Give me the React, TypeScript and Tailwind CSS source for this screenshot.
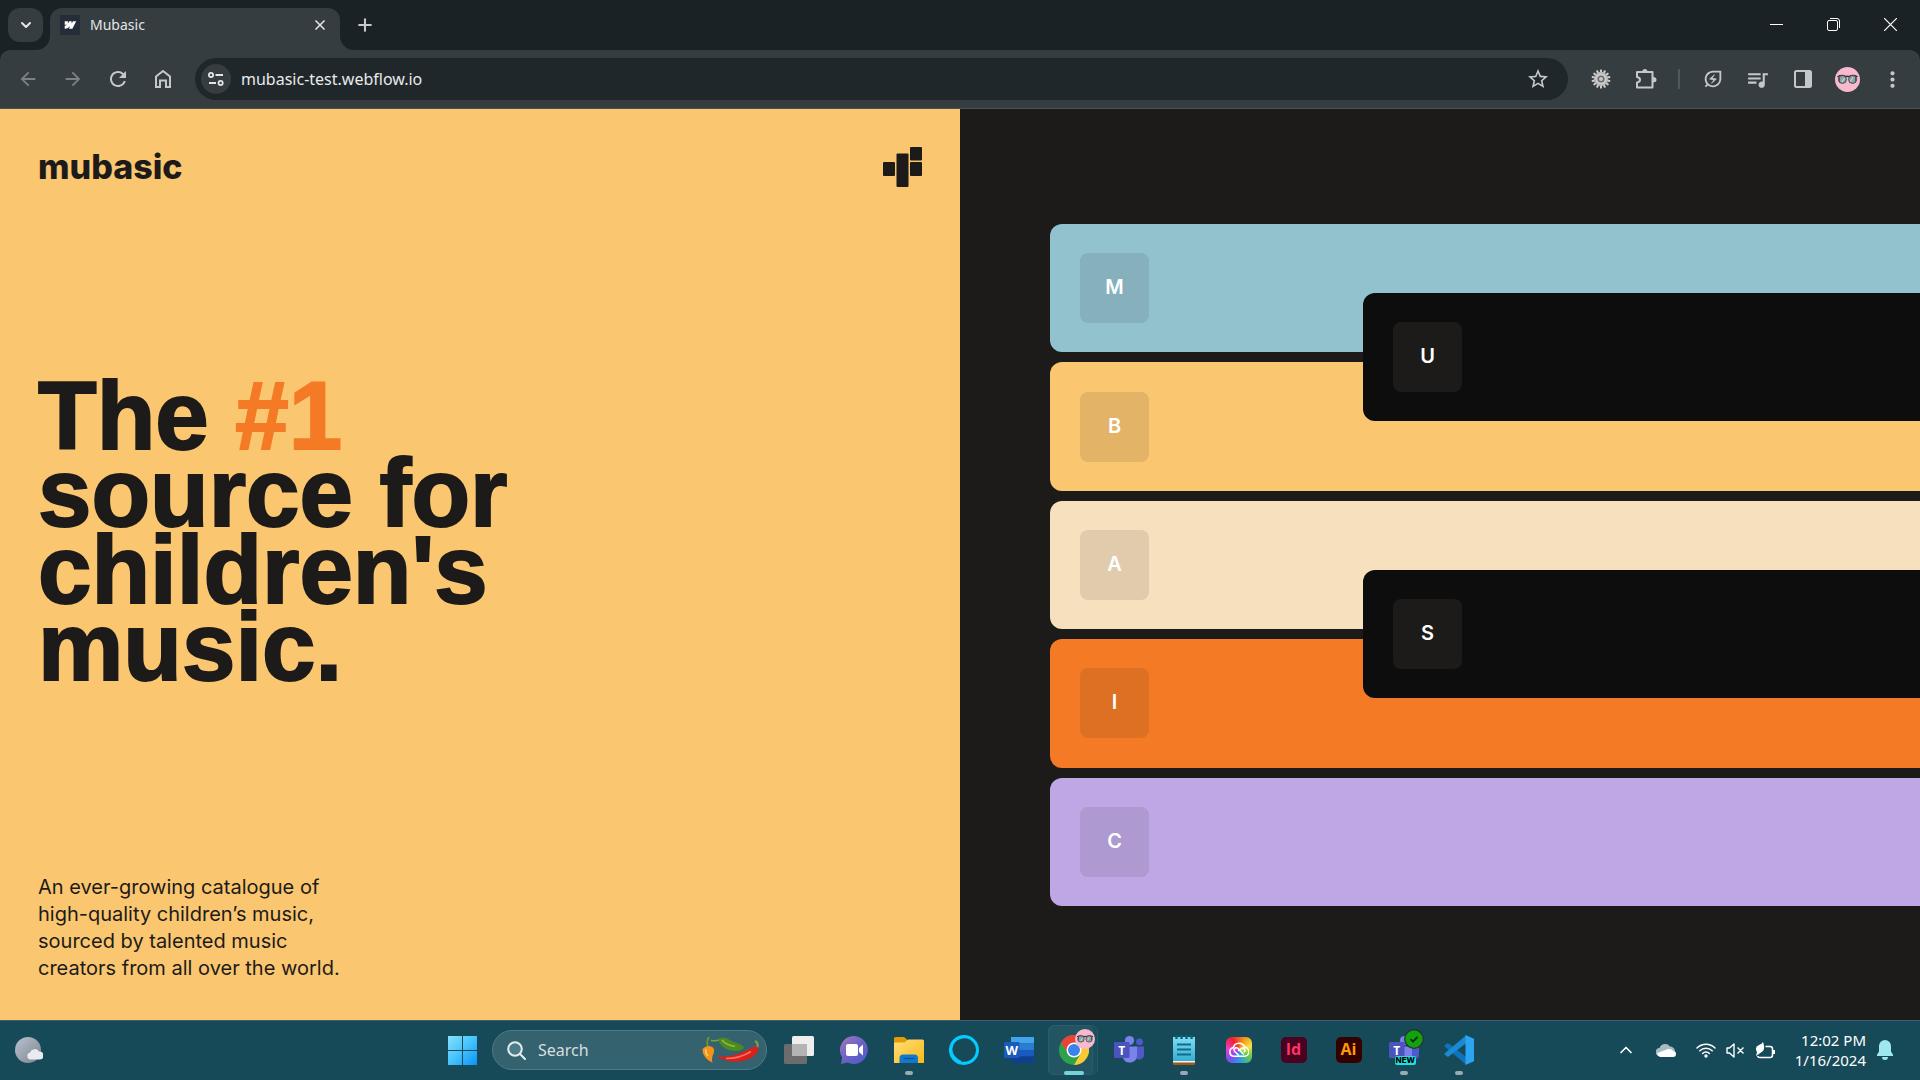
import React from "react";
import { ChevronDown, ChevronUp, Plus, X } from "lucide-react";
import {
  MdArrowBack,
  MdArrowForward,
  MdMoreVert,
  MdOutlineEnergySavingsLeaf,
  MdQueueMusic,
  MdRefresh,
  MdStarBorder,
} from "react-icons/md";

const UI_FONT = "font-['Noto_Sans','Open_Sans',sans-serif]";

/* ---------- shared drawings ---------- */

function Sunglasses({ className }: { className?: string }) {
  return (
    <svg viewBox="0 0 25 25" className={className} aria-hidden="true">
      <circle cx="12.500" cy="12.500" r="12.500" fill="#f8b9cf" />
      <path d="M2.500 9.800Q7 7.500 11 9.600q1.500-.8 3 0 4-2.100 8.500.2" fill="none" stroke="#2f3133" strokeWidth="1.500" />
      <circle cx="7.400" cy="12.400" r="4" fill="#8ba3a8" stroke="#4a4744" strokeWidth="1" />
      <circle cx="17.600" cy="12.400" r="4" fill="#8ba3a8" stroke="#4a4744" strokeWidth="1" />
      <path d="M5 9.500a3.800 3.800 0 0 0 0 5.800zM20 9.500a3.800 3.800 0 0 1 0 5.800z" fill="#4b5558" />
      <path d="M7 15l2.500-4M15.500 14.500l2.500-4" stroke="#c6d6d8" strokeWidth="1.200" />
    </svg>
  );
}

/* ---------- browser window ---------- */

function TabStrip() {
  return (
    <div className="flex h-[50px] bg-[#1b2225] text-[#e3e6e7]">
      <button aria-label="Search tabs" className="ml-2 mt-2 flex h-[34px] w-[35px] items-center justify-center rounded-xl bg-[#363d40]">
        <ChevronDown size={16} strokeWidth={3} />
      </button>
      <div className="relative ml-[7px] mt-2 flex h-[42px] w-[290px] items-center rounded-t-xl bg-[#363d40] pb-2 pl-[10px] pr-3">
        <svg viewBox="0 0 14 14" className="absolute -left-[14px] bottom-0 size-[14px]" aria-hidden="true">
          <path d="M14 0v14H0A14 14 0 0 0 14 0z" fill="#363d40" />
        </svg>
        <svg viewBox="0 0 14 14" className="absolute -right-[14px] bottom-0 size-[14px]" aria-hidden="true">
          <path d="M0 0v14h14A14 14 0 0 1 0 0z" fill="#363d40" />
        </svg>
        <svg viewBox="0 0 20 20" className="size-5" aria-hidden="true">
          <path d="M0 0h20v20H0z" fill="#262c38" />
          <path d="M16.200 6.200l-3.800 7.600H8.900l1.300-2.700c-1.400 1.700-3 2.600-5.500 2.700v-3s1.500-.1 2.400-1H4.700V6.300h3.200v2.300l1.300-2.400h2.400v2.300l1.400-2.300z" fill="#fff" />
        </svg>
        <span className="ml-[10px] flex-1 text-[14px] leading-5">Mubasic</span>
        <button aria-label="Close tab">
          <X size={16} strokeWidth={2.500} />
        </button>
      </div>
      <button aria-label="New tab" className="ml-[15px] mt-[15px] flex size-5 items-center justify-center text-[#c5cbcd]">
        <Plus size={20} strokeWidth={2.500} />
      </button>
      <div className="ml-auto flex h-10 pr-px pt-[9px] text-white">
        <button aria-label="Minimize" className="flex w-[57px] items-center justify-center">
          <svg viewBox="0 0 13 13" className="size-[13px]"><path d="M0 6.500h13" stroke="currentColor" /></svg>
        </button>
        <button aria-label="Restore" className="flex w-[57px] items-center justify-center">
          <svg viewBox="0 0 13 13" className="size-[13px]" fill="none" stroke="currentColor">
            <rect x=".5" y="2.500" width="10" height="10" rx="1.500" />
            <path d="M3 .5h7a2.500 2.500 0 0 1 2.500 2.500v7" />
          </svg>
        </button>
        <button aria-label="Close" className="flex w-[57px] items-center justify-center">
          <svg viewBox="0 0 13 13" className="size-[13px]"><path d="M0 0l13 13M13 0L0 13" stroke="currentColor" strokeWidth="1.200" /></svg>
        </button>
      </div>
    </div>
  );
}

function ToolButton({ label, children }: { label: string; children: React.ReactNode }) {
  return (
    <button aria-label={label} className="flex h-[42px] w-[45px] shrink-0 items-center justify-center">
      {children}
    </button>
  );
}

function GearIcon() {
  const teeth = Array.from({ length: 14 }, (_, i) => (i * 360) / 14);
  return (
    <svg viewBox="0 0 20 20" className="size-5" aria-hidden="true">
      {teeth.map((a) => (
        <rect key={a} x="9" y=".5" width="2" height="4" rx=".6" fill="#cfcfcf" transform={`rotate(${a} 10 10)`} />
      ))}
      <circle cx="10" cy="10" r="7.200" fill="#b4b4b4" />
      <circle cx="10" cy="10" r="5.500" fill="#cdcdcd" />
      <circle cx="10" cy="10" r="3.600" fill="#6a6c6d" />
      <circle cx="10" cy="10" r="2" fill="#c8c8c8" />
    </svg>
  );
}

function Toolbar() {
  return (
    <div className="bg-[#1b2225]">
      <div className="flex h-[59px] items-start rounded-t-[10px] border-b border-[#4b5254] bg-[#363d40] px-[5px] pt-2 text-[#c3c9cb]">
        <div className="flex">
          <button aria-label="Back" className="flex h-[42px] w-[45px] items-center justify-center text-[#7c8284]"><MdArrowBack size={22} /></button>
          <button aria-label="Forward" className="flex h-[42px] w-[45px] items-center justify-center text-[#7c8284]"><MdArrowForward size={22} /></button>
          <ToolButton label="Reload"><MdRefresh size={24} /></ToolButton>
          <ToolButton label="Home">
            <svg viewBox="0 0 18 20" className="h-5 w-[18px]" fill="none" stroke="currentColor" strokeWidth="2">
              <path d="M2 7.500L9 2l7 5.500V18h-4v-6.500H6V18H2z" />
            </svg>
          </ToolButton>
        </div>
        <div className="ml-[10px] flex h-[42px] flex-1 items-center rounded-full bg-[#20272a] pl-[6px] pr-[18px]">
          <button aria-label="View site information" className="flex size-[30px] items-center justify-center rounded-full bg-[#363d40]">
            <svg viewBox="0 0 16 14" className="h-[14px] w-4" fill="none" stroke="#e3e6e7" strokeWidth="1.800">
              <circle cx="3" cy="3" r="2.100" /><path d="M7.500 3H15M1 11h7" /><circle cx="12.600" cy="11" r="2.100" />
            </svg>
          </button>
          <input aria-label="Address" defaultValue="mubasic-test.webflow.io" className="ml-[10px] h-9 min-w-0 flex-1 bg-transparent text-[16px] text-[#e8eaeb] outline-none" />
          <button aria-label="Bookmark this tab"><MdStarBorder size={24} /></button>
        </div>
        <div className="ml-[10px] flex items-center">
          <ToolButton label="Settings extension"><GearIcon /></ToolButton>
          <ToolButton label="Extensions">
            <svg viewBox="0 0 22 22" className="size-[22px]" fill="none" stroke="currentColor" strokeWidth="2" strokeLinejoin="round">
              <path d="M2 4h15.500v15.500H2v-5q3-.4 3-2.700T2 9z" />
              <path d="M7.400 3.500a2.500 2.500 0 0 1 5 0zM18 9.300a2.500 2.500 0 0 1 0 5z" fill="currentColor" stroke="none" />
              <path d="M18 9.300h1a2.500 2.500 0 0 1 0 5h-1z" fill="currentColor" stroke="none" />
            </svg>
          </ToolButton>
          <span className="mx-[10px] h-5 w-[2px] bg-[#50585b]" />
          <ToolButton label="Energy saver"><MdOutlineEnergySavingsLeaf size={22} /></ToolButton>
          <ToolButton label="Media controls"><MdQueueMusic size={25} /></ToolButton>
          <ToolButton label="Side panel">
            <svg viewBox="0 0 18 18" className="size-[18px]">
              <rect x="1" y="1" width="16" height="16" rx="1.500" fill="none" stroke="currentColor" strokeWidth="2" />
              <path d="M11 1h6v16h-6z" fill="currentColor" />
            </svg>
          </ToolButton>
          <ToolButton label="Profile"><Sunglasses className="size-[25px]" /></ToolButton>
          <ToolButton label="Menu"><MdMoreVert size={25} /></ToolButton>
        </div>
      </div>
    </div>
  );
}

/* ---------- page ---------- */

function Tile({ letter, tone }: { letter: string; tone: string }) {
  return (
    <span className={`flex h-[70px] w-[69px] items-center justify-center rounded-lg pb-0.5 text-xl font-semibold text-white ${tone}`}>
      {letter}
    </span>
  );
}

type Key = { letter: string; bg: string; sharp?: string };

const KEYS: Key[] = [
  { letter: "M", bg: "bg-[#92c2ce]", sharp: "U" },
  { letter: "B", bg: "bg-[#fac670]" },
  { letter: "A", bg: "bg-[#f6e0be]", sharp: "S" },
  { letter: "I", bg: "bg-[#f47a25]" },
  { letter: "C", bg: "bg-[#bfa7e5]" },
];

function Keyboard() {
  return (
    <section aria-label="Music keyboard" className="flex flex-col gap-[10px] overflow-hidden bg-[#1d1b19] pb-[114px] pl-[90px] pt-[115px] font-['Inter',sans-serif]">
      {KEYS.map((key) => (
        <div key={key.letter} className={`relative flex flex-1 items-center rounded-l-xl pl-[30px] ${key.bg}`}>
          <Tile letter={key.letter} tone="bg-[#1d1b19]/10" />
          {key.sharp && (
            <div className="absolute left-[313px] right-0 top-[69px] z-10 flex h-full items-center rounded-l-xl bg-[#0d0d0d] pl-[30px]">
              <Tile letter={key.sharp} tone="bg-[#1d1b19]" />
            </div>
          )}
        </div>
      ))}
    </section>
  );
}

function Hero() {
  return (
    <section className="flex flex-col justify-between bg-[#fac670] p-[38px] font-['Liberation_Sans',sans-serif] text-[#1d1b19]">
      <header className="flex items-start justify-between">
        <a href="#" className="font-['Inter',sans-serif] text-[34px] leading-10 font-extrabold">mubasic</a>
        <svg viewBox="0 0 39 40" className="h-10 w-[39px]" fill="currentColor" aria-hidden="true">
          <rect x="0" y="15" width="12" height="14" rx="1" />
          <rect x="13.500" y="6.500" width="12" height="33.500" rx="1" />
          <rect x="27" y="0" width="12" height="13.500" rx="1" />
          <rect x="27" y="15" width="12" height="14" rx="1" />
        </svg>
      </header>
      <h1 className="text-[96px] leading-[77px] font-bold [-webkit-text-stroke:2px_currentColor]">
        The <span className="text-[#f47a25]">#1</span>
        <br />source for
        <br />children's
        <br />music.
      </h1>
      <p className="font-['Inter',sans-serif] text-xl leading-[27px]">
        An ever-growing catalogue of
        <br />high-quality children’s music,
        <br />sourced by talented music
        <br />creators from all over the world.
      </p>
    </section>
  );
}

/* ---------- taskbar ---------- */

function StartIcon() {
  return (
    <svg viewBox="0 0 30 30" className="size-[30px]">
      <defs>
        <linearGradient id="start" gradientUnits="userSpaceOnUse" x1="0" y1="0" x2="30" y2="30">
          <stop offset="0" stopColor="#8be3fd" /><stop offset=".5" stopColor="#47c4fb" /><stop offset="1" stopColor="#0a93f5" />
        </linearGradient>
      </defs>
      <path d="M1 1h14v14H1zM16 1h14v14H16zM1 16h14v14H1zM16 16h14v14H16z" fill="url(#start)" />
    </svg>
  );
}

function PeppersIcon() {
  return (
    <svg viewBox="0 0 58 28" className="h-7 w-[58px]" aria-hidden="true">
      <path d="M7 11Q5 5 8 1" fill="none" stroke="#6b9a2a" strokeWidth="1.800" />
      <path d="M1.500 13Q6 8 12 11.500q2.500 3-.5 8.500-1 4 0 6.800Q7 25 4 21 1 17 1.500 13z" fill="#f2931d" />
      <path d="M5 13q-1 4 2 7" stroke="#ffd07a" strokeWidth="1.500" fill="none" />
      <path d="M10 4.500q5 1 9-1" fill="none" stroke="#7ba636" strokeWidth="1.500" />
      <path d="M17 3q5-3 10 0t10 4.500q5 1.500 6 4.500-4 4-13 2.500Q19 12 17 3z" fill="#4d8b1e" />
      <path d="M21 4q4 5 13 6.500" stroke="#8abf4a" strokeWidth="1.500" fill="none" />
      <path d="M56 12q2-5-2-7" fill="none" stroke="#7ba636" strokeWidth="2" />
      <path d="M15.500 19.500q8 2 16 0t14-5q4-3 9-4 3 0 3 3-3 8-12 10.500-18 5-30-4.500z" fill="#d8201c" />
      <path d="M25 22.500q14 0 25-7" stroke="#ff6d5e" strokeWidth="1.500" fill="none" />
    </svg>
  );
}

function TaskViewIcon() {
  return (
    <svg viewBox="0 0 30 28" className="h-7 w-[30px]">
      <rect x="0" y="8" width="23" height="20" rx="1.500" fill="#6c6c6c" />
      <rect x="8" y="0" width="22" height="20" rx="1.500" fill="#eeeeee" />
      <path d="M8 8h15v12H8z" fill="#b4b4b4" />
    </svg>
  );
}

function ChatIcon() {
  return (
    <svg viewBox="0 0 30 30" className="size-[30px]">
      <defs>
        <linearGradient id="chat" x1="0" y1="0" x2="1" y2="1"><stop offset="0" stopColor="#a478b8" /><stop offset=".5" stopColor="#6b63c6" /><stop offset="1" stopColor="#5058c8" /></linearGradient>
      </defs>
      <path d="M15 1a14 14 0 1 1-6.500 26.500L2 29l1.200-6.500A14 14 0 0 1 15 1z" fill="url(#chat)" />
      <rect x="7" y="9" width="12" height="12" rx="2" fill="#fff" />
      <path d="M20 13l4-3.500v11L20 17z" fill="#fff" />
    </svg>
  );
}

function FolderIcon() {
  return (
    <svg viewBox="0 0 30 28" className="h-7 w-[30px]">
      <defs><linearGradient id="folder" x1="0" y1="0" x2="1" y2="1"><stop offset="0" stopColor="#ffe07a" /><stop offset="1" stopColor="#f8b916" /></linearGradient></defs>
      <path d="M0 2.500A1.500 1.500 0 0 1 1.500 1H10l3 2.500v5H0z" fill="#e39c06" />
      <path d="M0 6.500h10.500L14 3.500h14.500A1.500 1.500 0 0 1 30 5v22H0z" fill="url(#folder)" />
      <path d="M5.500 27v-5A3.500 3.500 0 0 1 9 18.500h11.500A3.500 3.500 0 0 1 24 22v5z" fill="#1178cf" />
      <path d="M9.500 22.500h11" stroke="#0a4f94" strokeWidth="1.200" />
    </svg>
  );
}

function AlexaIcon() {
  return (
    <svg viewBox="0 0 30 30" className="size-[30px]">
      <path d="M15 0a15 15 0 0 1 0 30q-2.500 0-2.700-1.600-.1-1.600 1.500-1.700A11.800 11.800 0 1 0 3.400 13.700Q3 21.500 12.500 26v3.800A15 15 0 0 1 15 0z" fill="#05caff" />
    </svg>
  );
}

function WordIcon() {
  return (
    <svg viewBox="0 0 30 28" className="h-7 w-[30px]">
      <path d="M7 1h23v6.500H7z" fill="#41a5ee" /><path d="M7 7.500h23V14H7z" fill="#2b7cd3" />
      <path d="M7 14h23v6.500H7z" fill="#185abd" /><path d="M7 20.500h23V27H7z" fill="#103f91" />
      <rect x="0" y="6" width="15.500" height="16" rx="1.200" fill="#185abd" />
      <text x="7.700" y="18.700" textAnchor="middle" fontSize="13" fontWeight="700" fill="#fff" className="font-['Open_Sans',sans-serif]">W</text>
    </svg>
  );
}

function ChromeIcon() {
  return (
    <svg viewBox="0 0 30 30" className="size-[30px]">
      <circle cx="15" cy="15" r="15" fill="#2ba24c" />
      <path d="M2 7.500A15 15 0 0 1 28 7.500H15L9 18.500z" fill="#ea4335" />
      <path d="M28 7.500A15 15 0 0 1 15 30l6.500-11.300L22 7.500z" fill="#fcc934" />
      <circle cx="15" cy="15" r="7.500" fill="#fff" /><circle cx="15" cy="15" r="6" fill="#3b82ec" />
    </svg>
  );
}

function TeamsIcon() {
  return (
    <svg viewBox="0 0 30 28" className="h-7 w-[30px]">
      <circle cx="25.500" cy="5.800" r="3.400" fill="#5059c9" /><path d="M21 10.500h9v8a5 5 0 0 1-9 3z" fill="#5059c9" />
      <circle cx="15.500" cy="4.600" r="4.600" fill="#7b83eb" /><path d="M9 10.500h14V20a7.300 7.300 0 0 1-14 2z" fill="#7b83eb" />
      <rect x="0" y="6" width="15.500" height="16" rx="1.200" fill="#4b53bc" />
      <text x="7.700" y="18.500" textAnchor="middle" fontSize="12" fontWeight="700" fill="#fff" className="font-['Open_Sans',sans-serif]">T</text>
    </svg>
  );
}

function NotepadIcon() {
  return (
    <svg viewBox="0 0 22 30" className="h-[30px] w-[22px]">
      <defs><linearGradient id="note" x1="0" y1="0" x2="0" y2="1"><stop offset="0" stopColor="#7fdcf5" /><stop offset="1" stopColor="#35afcf" /></linearGradient></defs>
      <path d="M0 26h22v3a1 1 0 0 1-1 1H1a1 1 0 0 1-1-1z" fill="#a5570f" /><path d="M0 25h22v2.500H0z" fill="#f2f2f2" />
      <path d="M0 2h22v24H0z" fill="url(#note)" />
      <path d="M4 9.500h14M4 14.500h14M4 19.500h14" stroke="#106a8c" strokeWidth="2" />
      <path d="M3.500 0v4M8.500 0v4M13.500 0v4M18.500 0v4" stroke="#125f80" strokeWidth="2.400" />
    </svg>
  );
}

function CreativeCloudIcon() {
  return (
    <span className="flex size-[26px] items-center justify-center rounded-md bg-[conic-gradient(from_20deg,#f58a1c,#f6e53b,#61c84a,#2f9ae8,#7a4ef0,#f13cc8,#ee1f2d,#f58a1c)]">
      <svg viewBox="0 0 22 18" className="h-4 w-5" fill="none" stroke="#fff" strokeWidth="1.800">
        <path d="M5.500 16a4.800 4.800 0 0 1-1-9.500A6.800 6.800 0 0 1 17.500 6 5 5 0 0 1 16.500 16z" />
        <path d="M11 15.500L6 10.500a2.500 2.500 0 0 1 3.500-3.500l7 7M10 10l3.500-2.500a2.500 2.500 0 0 1 3 4" />
      </svg>
    </span>
  );
}

function TeamsNewIcon() {
  return (
    <span className="relative flex flex-col items-center">
      <TeamsIcon />
      <svg viewBox="0 0 20 20" className="absolute -right-[5px] -top-[7px] size-5">
        <circle cx="10" cy="10" r="9.300" fill="#13a10e" stroke="#263238" strokeWidth="1.300" />
        <path d="M6.500 10.200l2.500 2.400 4.500-4.600" fill="none" stroke="#0b2e0b" strokeWidth="1.800" />
      </svg>
      <span className="absolute -bottom-[1px] left-[6px] rounded-[2px] bg-[#21dfe0] px-px font-['Inter',sans-serif] text-[8px] leading-[9px] font-extrabold text-black">NEW</span>
    </span>
  );
}

function VsCodeIcon() {
  return (
    <svg viewBox="0 0 30 30" className="size-[30px]">
      <path d="M.8 10.300L3 8.500q.8-.6 1.600 0L22.500 22v8L.8 11.800q-.7-.8 0-1.500z" fill="#1072b8" />
      <path d="M.8 19.700L3 21.500q.8.6 1.600 0L22.500 8V0L.8 18.200q-.7.800 0 1.500z" fill="#1b8ad6" />
      <path d="M21.500 0L30 3.700v22.600L21.500 30z" fill="#2ba4f2" />
    </svg>
  );
}

function AdobeIcon({ text, tone }: { text: string; tone: string }) {
  return (
    <span className={`flex size-[26px] items-center justify-center rounded-[5px] pb-[2px] font-['Open_Sans',sans-serif] text-[16px] leading-none font-bold ${tone}`}>{text}</span>
  );
}

function TaskButton({ label, open, children }: { label: string; open?: boolean; children: React.ReactNode }) {
  return (
    <button aria-label={label} className="relative flex h-[50px] w-[55px] items-center justify-center">
      {children}
      {open && <span className="absolute bottom-0 h-1 w-2 rounded-full bg-[#98abb3]" />}
    </button>
  );
}

function Taskbar() {
  return (
    <footer className="grid h-[60px] grid-cols-[1fr_auto_1fr] items-center border-t border-[#3d5d68] bg-[#164a59] pb-px text-white">
      <button aria-label="Weather" className="ml-[15px] w-7">
        <svg viewBox="0 0 28 27" className="h-[27px] w-7">
          <defs><linearGradient id="moon" x1="0" y1="0" x2="1" y2="1"><stop offset="0" stopColor="#b9c3d0" /><stop offset="1" stopColor="#7b838c" /></linearGradient></defs>
          <circle cx="13" cy="13" r="13" fill="url(#moon)" />
          <path d="M15 22.500a3.600 3.600 0 0 1 0-7 5 5 0 0 1 9-1 4 4 0 0 1 1 8z" fill="#e8ecf2" />
        </svg>
      </button>

      <nav aria-label="Taskbar" className="flex items-center">
        <TaskButton label="Start"><StartIcon /></TaskButton>
        <label className="ml-[3px] mr-1 flex h-10 w-[275px] items-center rounded-full border border-[#517984] bg-[#35626f] pl-[14px] pr-[7px]">
          <svg viewBox="0 0 19 19" className="size-[19px]" fill="none" stroke="#e5ecee" strokeWidth="2">
            <circle cx="8" cy="8" r="6.800" fill="#4a7c89" /><path d="M13 13l5 5" strokeLinecap="round" />
          </svg>
          <input aria-label="Search" placeholder="Search" className="ml-3 min-w-0 flex-1 bg-transparent text-[16px] outline-none placeholder:text-[#d5dfe2]" />
          <PeppersIcon />
        </label>
        <TaskButton label="Task view"><TaskViewIcon /></TaskButton>
        <TaskButton label="Chat"><ChatIcon /></TaskButton>
        <TaskButton label="File Explorer" open><FolderIcon /></TaskButton>
        <TaskButton label="Alexa"><AlexaIcon /></TaskButton>
        <TaskButton label="Word"><WordIcon /></TaskButton>
        <button aria-label="Chrome" className="relative flex h-[50px] w-[55px] items-center justify-center">
          <span className="absolute inset-y-0 left-[2px] w-[50px] rounded-md border border-[#265868] bg-[#1b4f5e]" />
          <span className="absolute inset-y-0 left-[2px] w-[45px] rounded-md border border-[#2c5c6a] bg-[#235462]" />
          <span className="relative"><ChromeIcon /></span>
          <Sunglasses className="absolute right-[6px] top-1 size-5" />
          <span className="absolute bottom-0 h-1 w-5 rounded-full bg-[#76d3dc]" />
        </button>
        <TaskButton label="Teams"><TeamsIcon /></TaskButton>
        <TaskButton label="Notepad" open><NotepadIcon /></TaskButton>
        <TaskButton label="Creative Cloud"><CreativeCloudIcon /></TaskButton>
        <TaskButton label="InDesign"><AdobeIcon text="Id" tone="bg-[#49021f] text-[#ff3366]" /></TaskButton>
        <TaskButton label="Illustrator"><AdobeIcon text="Ai" tone="bg-[#330000] text-[#ff9a00]" /></TaskButton>
        <TaskButton label="Teams (new)" open><TeamsNewIcon /></TaskButton>
        <TaskButton label="Visual Studio Code" open><VsCodeIcon /></TaskButton>
      </nav>

      <div className="flex items-center justify-end pr-[27px]">
        <button aria-label="Show hidden icons"><ChevronUp size={20} strokeWidth={2} /></button>
        <button aria-label="OneDrive" className="ml-5">
          <svg viewBox="0 0 20 14" className="h-[14px] w-5">
            <path d="M4 13a4 4 0 0 1-.5-8A6 6 0 0 1 14 3.500a5 5 0 0 1 5 5z" fill="#a9bac1" />
            <path d="M4.500 14A3.600 3.600 0 0 1 1.500 10L12 6q4-.5 5 2a3 3 0 0 1 0 6z" fill="#fff" />
          </svg>
        </button>
        <button aria-label="Network, sound and battery" className="ml-5 flex items-center gap-[10px]">
          <svg viewBox="0 0 20 16" className="h-4 w-5" fill="none" stroke="currentColor" strokeWidth="1.500" strokeLinecap="round">
            <path d="M1 6a12.500 12.500 0 0 1 18 0M3.800 8.800a8.700 8.700 0 0 1 12.400 0M6.600 11.500a4.800 4.800 0 0 1 6.800 0" />
            <circle cx="10" cy="14" r="1.700" fill="currentColor" stroke="none" />
          </svg>
          <svg viewBox="0 0 19 15" className="h-[15px] w-[19px]" fill="none" stroke="currentColor" strokeWidth="1.400" strokeLinejoin="round">
            <path d="M1 5h2.500L8 1v13l-4.500-4H1zM11.500 4.500l6 6M17.500 4.500l-6 6" />
          </svg>
          <svg viewBox="0 0 20 17" className="h-[17px] w-5" fill="none" stroke="currentColor" strokeWidth="1.500">
            <path d="M10.500 4.500H15A2.500 2.500 0 0 1 17.500 7v6a2.500 2.500 0 0 1-2.500 2.500H5A2.500 2.500 0 0 1 2.500 14" />
            <path d="M19 8v4" strokeWidth="2" />
            <path d="M8 0q3 8-2 10.500L1 14l1-4Q-1 5 4 3 7 2 8 0z" fill="currentColor" stroke="none" />
          </svg>
        </button>
        <button className="ml-5 text-right text-[15px] leading-5">
          12:02 PM
          <br />1/16/2024
        </button>
        <button aria-label="Notifications" className="ml-[11px]">
          <svg viewBox="0 0 16 20" className="h-5 w-4" fill="#9fe9ee">
            <path d="M8 0a6 6 0 0 1 6 6v5.500l2 3.200V16H0v-1.300l2-3.200V6a6 6 0 0 1 6-6zM5 17h6a3 3 0 0 1-6 0z" />
          </svg>
        </button>
      </div>
    </footer>
  );
}

export default function App() {
  return (
    <div className={`flex min-h-screen flex-col ${UI_FONT}`}>
      <TabStrip />
      <Toolbar />
      <main className="grid flex-1 grid-cols-2">
        <Hero />
        <Keyboard />
      </main>
      <Taskbar />
    </div>
  );
}
